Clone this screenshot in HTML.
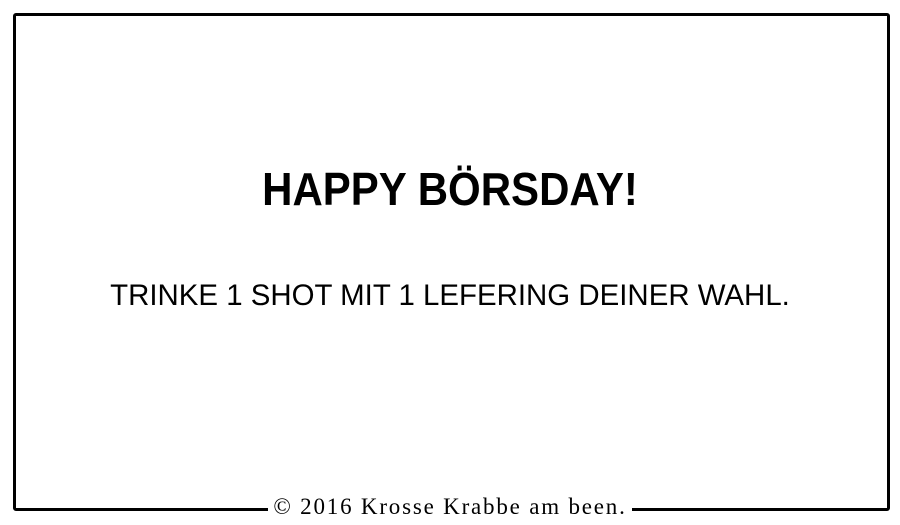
<!DOCTYPE html>
<html><head><meta charset="utf-8"><style>
html,body{margin:0;padding:0;background:#fff;width:900px;height:525px;overflow:hidden}
.box{position:absolute;left:13px;top:13px;width:871px;height:492px;border:3px solid #000;border-radius:3px}
.t1{position:absolute;left:0;width:900px;top:166px;text-align:center;font:bold 40px "Liberation Sans",sans-serif;line-height:48px;transform:scale(1.05,1.15);color:#000}
.t2{position:absolute;left:0;width:900px;top:277px;text-align:center;font:27px "Liberation Sans",sans-serif;line-height:36px;color:#000;transform:scale(1.09,1.1)}
.ft{position:absolute;left:0;width:900px;top:493px;text-align:center}
.ft span{background:#fff;padding:0 5px;font:23px "Liberation Serif",serif;letter-spacing:1.8px;color:#000;line-height:28px}
</style></head><body>
<div class="box"></div>
<div class="t1">HAPPY BÖRSDAY!</div>
<div class="t2">TRINKE 1 SHOT MIT 1 LEFERING DEINER WAHL.</div>
<div class="ft"><span>© 2016 Krosse Krabbe am been.</span></div>
</body></html>
